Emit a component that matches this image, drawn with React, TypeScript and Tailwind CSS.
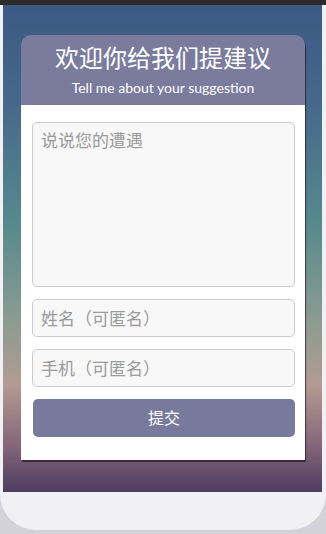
import React from 'react';

const font = { fontFamily: 'Lato, "Noto Sans CJK SC", sans-serif' };

export default function App() {
  return (
    <div className="w-[326px] h-[534px] bg-[#d3d2db] overflow-hidden" style={font}>
      <div className="h-[530px] bg-[#f1f1f4] rounded-b-[36px] flex flex-col">
        <div className="h-[5px] bg-[#2e2a2c]" />
        <div className="ml-[3px] mr-[4px] h-[487px] bg-[linear-gradient(to_bottom,#3b5984_0%,#46698b_20%,#568a8d_45%,#8c9b91_65%,#b39b92_78%,#86687a_90%,#4f3c60_100%)] pt-[30px] px-[18px]">
          <div className="w-[284px] rounded-t-[10px] shadow-[1px_2px_1px_rgba(40,25,40,0.75)]">
            <div className="h-[70px] bg-[#7a7b9d] rounded-t-[10px] flex flex-col items-center text-white">
              <h1 className="text-[24px] leading-[30px] mt-[7px] font-normal" style={{ fontFamily: '"Noto Sans CJK SC", sans-serif' }}>
                欢迎你给我们提建议
              </h1>
              <p className="text-[14px] leading-[18px] mt-[7px]">Tell me about your suggestion</p>
            </div>
            <form className="bg-white pt-[17px] pb-[23px] pl-[11px] pr-[10px] flex flex-col gap-[12px]">
              <textarea
                placeholder="说说您的遭遇"
                className="h-[165px] resize-none rounded-[5px] border border-[#cccccc] bg-[#f8f8f8] px-[8px] py-[5px] text-[17px] leading-[26px] placeholder-[#9a9a9a] outline-none"
              />
              <input
                placeholder="姓名（可匿名）"
                className="h-[38px] rounded-[5px] border border-[#cccccc] bg-[#f8f8f8] px-[8px] text-[17px] placeholder-[#9a9a9a] outline-none"
              />
              <input
                placeholder="手机（可匿名）"
                className="h-[38px] rounded-[5px] border border-[#cccccc] bg-[#f8f8f8] px-[8px] text-[17px] placeholder-[#9a9a9a] outline-none"
              />
              <button
                type="button"
                className="h-[38px] ml-[1px] rounded-[5px] bg-[#777a9c] text-white text-[16px]"
              >
                提交
              </button>
            </form>
          </div>
        </div>
      </div>
    </div>
  );
}
